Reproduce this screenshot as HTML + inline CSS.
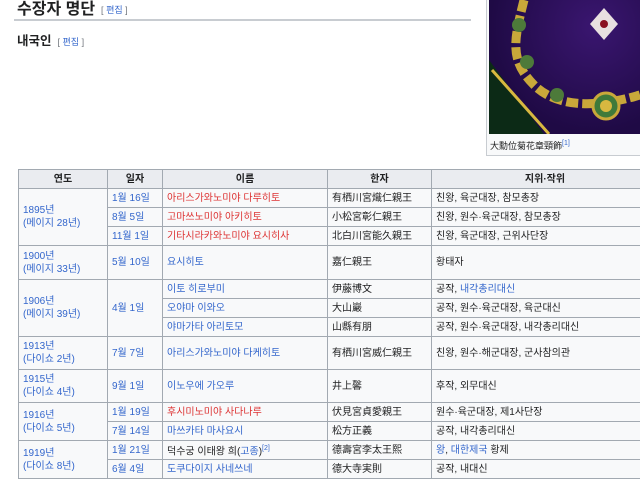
<!DOCTYPE html>
<html><head><meta charset="utf-8"><style>
*{margin:0;padding:0;box-sizing:border-box}
body{width:640px;height:477px;overflow:hidden;background:#fff;font-family:"Liberation Sans","Noto Sans CJK KR",sans-serif;color:#202122;position:relative}
.h2{position:absolute;left:17px;top:2px;font-size:16px;line-height:16px;font-weight:bold}
.ed{font-size:9px;font-weight:normal;color:#3366cc;margin-left:6px;vertical-align:middle}
.ed b{color:#72777d;font-weight:normal}
.line{position:absolute;left:14px;top:19px;width:457px;height:2px;background:#c8ccd1}
.h3{position:absolute;left:17px;top:34px;font-size:12.5px;line-height:14px;font-weight:bold}
.fig{position:absolute;left:486px;top:-2px;width:160px;height:158px;background:#f8f9fa;border:1px solid #c8ccd1}
.img{position:absolute;left:489px;top:0;width:151px;height:134px;background:radial-gradient(ellipse at 70% 20%,#3a1670,#1f0a45 70%);overflow:hidden}
.cap{position:absolute;left:490px;top:139px;font-size:9px;color:#202122}
.cap sup{color:#3366cc;font-size:7px}
table{position:absolute;left:18px;top:169px;border-collapse:collapse;font-size:10px;table-layout:fixed;width:640px}
td,th{border:1px solid #a2a9b1;background:#f8f9fa;padding:0 4px;white-space:nowrap;overflow:hidden;line-height:13px}
th{background:#eaecf0;font-weight:bold;text-align:center;height:19px}
td{height:19px}
.b{color:#3366cc}.r{color:#d33}
sup{font-size:7px;color:#3366cc}
</style></head><body>
<div class="h2">수장자 명단<span class="ed"><b>[ </b>편집<b> ]</b></span></div>
<div class="line"></div>
<div class="h3">내국인<span class="ed"><b>[ </b>편집<b> ]</b></span></div>
<div class="fig"></div>
<div class="img">
<svg width="151" height="134" viewBox="0 0 151 134">
<polygon points="0,60 0,134 55,134" fill="#0c2a16"/>
<path d="M3,70 L60,134" stroke="#d8b840" stroke-width="3" fill="none"/>
<path d="M35,0 C25,40 20,60 45,85 C65,105 100,110 151,95" stroke="#c9a83a" stroke-width="9" fill="none" stroke-dasharray="12 4"/>
<circle cx="30" cy="25" r="7" fill="#4d7a3a"/><circle cx="38" cy="62" r="7" fill="#4d7a3a"/><circle cx="68" cy="95" r="7" fill="#4d7a3a"/>
<circle cx="117" cy="106" r="13" fill="#3f7a3a" stroke="#c9a83a" stroke-width="3"/><circle cx="117" cy="106" r="6" fill="#d8b840"/>
<polygon points="115,8 129,24 115,40 101,24" fill="#e8e0e0"/><circle cx="115" cy="24" r="4" fill="#8a1020"/>
</svg></div>
<div class="cap">大勳位菊花章頸飾<sup>[1]</sup></div>
<table>
<colgroup><col style="width:89px"><col style="width:55px"><col style="width:165px"><col style="width:104px"><col style="width:227px"></colgroup>
<tr><th>연도</th><th>일자</th><th>이름</th><th>한자</th><th>지위·작위</th></tr>
<tr><td rowspan="3" class="b">1895년<br>(<span class="b">메이지</span> 28년)</td><td class="b">1월 16일</td><td class="r">아리스가와노미야 다루히토</td><td>有栖川宮熾仁親王</td><td>친왕, 육군대장, 참모총장</td></tr>
<tr><td class="b">8월 5일</td><td class="r">고마쓰노미야 아키히토</td><td>小松宮彰仁親王</td><td>친왕, 원수·육군대장, 참모총장</td></tr>
<tr><td class="b" style="height:18px">11월 1일</td><td class="r">기타시라카와노미야 요시히사</td><td>北白川宮能久親王</td><td>친왕, 육군대장, 근위사단장</td></tr>
<tr><td class="b" style="height:34px">1900년<br>(메이지 33년)</td><td class="b">5월 10일</td><td class="b">요시히토</td><td>嘉仁親王</td><td>황태자</td></tr>
<tr><td rowspan="3" class="b">1906년<br>(메이지 39년)</td><td rowspan="3" class="b">4월 1일</td><td class="b">이토 히로부미</td><td>伊藤博文</td><td>공작, <span class="b">내각총리대신</span></td></tr>
<tr><td class="b">오야마 이와오</td><td>大山巖</td><td>공작, 원수·육군대장, 육군대신</td></tr>
<tr><td class="b">야마가타 아리토모</td><td>山縣有朋</td><td>공작, 원수·육군대장, 내각총리대신</td></tr>
<tr><td class="b" style="height:33px">1913년<br>(다이쇼 2년)</td><td class="b">7월 7일</td><td class="b">아리스가와노미야 다케히토</td><td>有栖川宮威仁親王</td><td>친왕, 원수·해군대장, 군사참의관</td></tr>
<tr><td class="b" style="height:33px">1915년<br>(다이쇼 4년)</td><td class="b">9월 1일</td><td class="b">이노우에 가오루</td><td>井上馨</td><td>후작, 외무대신</td></tr>
<tr><td rowspan="2" class="b">1916년<br>(다이쇼 5년)</td><td class="b">1월 19일</td><td class="r">후시미노미야 사다나루</td><td>伏見宮貞愛親王</td><td>원수·육군대장, 제1사단장</td></tr>
<tr><td class="b" style="height:18px">7월 14일</td><td class="b">마쓰카타 마사요시</td><td>松方正義</td><td>공작, 내각총리대신</td></tr>
<tr><td rowspan="2" class="b">1919년<br>(다이쇼 8년)</td><td class="b">1월 21일</td><td>덕수궁 이태왕 희(<span class="b">고종</span>)<sup>[2]</sup></td><td>德壽宮李太王熙</td><td><span class="b">왕</span>, <span class="b">대한제국</span> 황제</td></tr>
<tr><td class="b">6월 4일</td><td class="b">도쿠다이지 사네쓰네</td><td>德大寺実則</td><td>공작, 내대신</td></tr>
</table>
</body></html>
